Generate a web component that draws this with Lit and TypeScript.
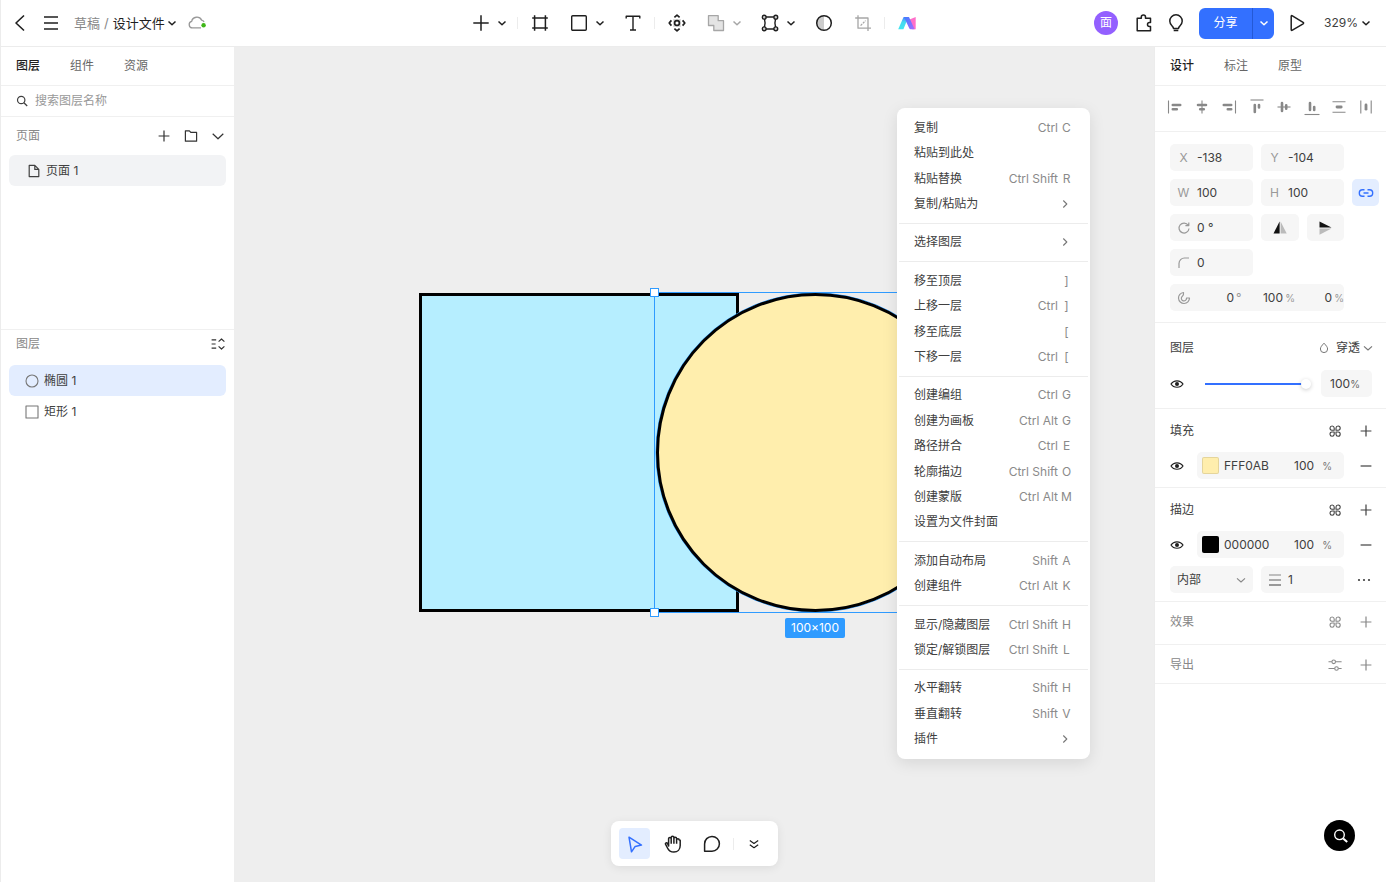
import { LitElement, html, svg, css, nothing, TemplateResult } from "lit";
import { customElement, property, state } from "lit/decorators.js";
import { classMap } from "lit/directives/class-map.js";

/* Every glyph is drawn on a 24 by 24 grid, centred on 12,12. */
const glyphs: Record<string, TemplateResult> = {
  back: svg`<path d="M16 4.5 8 12l8 7.5" stroke-width="1.6"/>`,
  menu: svg`<path d="M5 6h14M5 12h14M5 18h14" stroke-width="1.6"/>`,
  chevron: svg`<path d="m8.5 10.5 3.5 3.3 3.5-3.3" stroke-width="1.5"/>`,
  chevronThin: svg`<path d="m8 10.3 4 3.7 4-3.7" stroke-width="1.1"/>`,
  chevronWide: svg`<path d="m6.7 9.8 5.3 5 5.3-5" stroke-width="1.2"/>`,
  chevronRight: svg`<path d="m10.3 8.5 3.5 3.5-3.5 3.5" stroke-width="1.1"/>`,
  cloud: svg`<path d="M16 16.9H7.6a3.3 3.3 0 0 1-.9-6.5 5.2 4.9 0 0 1 9.9-1.3 3.6 3.6 0 0 1 2.500 1.9" stroke="#999" stroke-width="1.3"/><circle cx="18.6" cy="14.3" r="2.2" fill="#3fb618" stroke="none"/>`,
  plusLarge: svg`<path d="M12 4.3v15.4M4.3 12h15.4" stroke-width="1.5"/>`,
  plus: svg`<path d="M12 6.6v10.8M6.6 12h10.8" stroke-width="1.2"/>`,
  minus: svg`<path d="M6.6 12h10.8" stroke-width="1.2"/>`,
  frame: svg`<path d="M6.6 4.2v15.6M17.4 4.2v15.6M4.2 7h15.6M4.2 17h15.6" stroke-width="1.5"/>`,
  rect: svg`<rect x="4.7" y="4.7" width="14.6" height="14.6" rx="1" stroke-width="1.4"/>`,
  text: svg`<path d="M5.2 7.6V5.2h13.6v2.4M12 5.2v13.6M9 19h6" stroke-width="1.4"/>`,
  move: svg`<path d="M8 8h8v8H8z" fill="#ddd" stroke="none"/><circle cx="12" cy="12" r="2.4" fill="#fff" stroke-width="1.7"/><path d="m9.4 6.400 2.600-2.200 2.600 2.200M9.400 17.600l2.600 2.200 2.600-2.200M6.400 9.400 4.200 12l2.200 2.600M17.600 9.400l2.200 2.600-2.200 2.600" stroke-width="1.7"/>`,
  union: svg`<path d="M4.5 4.7h9.7v5h5.3v9.8H9.8v-5H4.5z" fill="#e4e4e4" stroke-width="1.3"/>`,
  vector: svg`<path d="M7.8 6h8.4M7.8 18h8.4M6.4 7.8c.9 2.8.9 5.6 0 8.4M17.6 7.8c-.9 2.8-.9 5.6 0 8.4" stroke-width="1.4"/><circle cx="6.2" cy="6.2" r="1.9" fill="#ccc" stroke-width="1.4"/><circle cx="17.8" cy="6.2" r="1.9" fill="#ccc" stroke-width="1.4"/><circle cx="6.2" cy="17.8" r="1.9" fill="#ccc" stroke-width="1.4"/><circle cx="17.8" cy="17.8" r="1.9" fill="#ccc" stroke-width="1.4"/>`,
  mask: svg`<path d="M12 4.7a7.3 7.3 0 0 0 0 14.6z" fill="#ccc" stroke="none"/><circle cx="12" cy="12" r="7.3" stroke-width="1.5"/>`,
  crop: svg`<path d="M7 4.2v13h13M4.2 7H17v13" stroke-width="1.3"/><path d="m9.6 14.6 5-5" stroke-width="1.2" stroke-dasharray="2.2 1"/>`,
  ai: svg`<defs><linearGradient id="a" x1="0" y1="1" x2="0" y2="0"><stop stop-color="#43e6f0"/><stop offset=".6" stop-color="#46d8f0"/><stop offset="1" stop-color="#4a7bff"/></linearGradient><linearGradient id="b" x1="0" y1="0" x2="1" y2="1"><stop stop-color="#3f7cff"/><stop offset="1" stop-color="#a86bff"/></linearGradient></defs><path d="M14.5 8.5 20.700 6v12.300h-3.600z" fill="#ff6fc9" stroke="none"/><path d="M8.600 6h4.800L8.400 18.300H3.200z" fill="url(#a)" stroke="none"/><path d="M9 6h5l5.600 12.300h-3.800q-1.200 0-1.700-1.200z" fill="url(#b)" stroke="none"/>`,
  puzzle: svg`<path d="M9.3 7.3V6.1a2.1 2.1 0 0 1 4.2 0v1.2h5v4.2h-1a2 2 0 0 0 0 4h1v4.2H5.2V7.3z" stroke-width="1.5"/>`,
  bulb: svg`<path d="M9.5 17.6c0-1.3-.8-2-1.6-2.9a6.2 6.2 0 1 1 8.2 0c-.8.9-1.6 1.6-1.6 2.9zM9.7 19.5h4.6" stroke-width="1.5"/>`,
  play: svg`<path d="M6.2 5.4v13.2q0 1.3 1.2.6l10.7-6.4q1-.7 0-1.4L7.4 4.8q-1.2-.7-1.2.6z" stroke-width="1.5"/>`,
  search: svg`<circle cx="11.200" cy="11" r="3.7" stroke-width="1.2"/><path d="m13.900 13.700 3.3 3.3" stroke-width="1.3"/>`,
  searchLarge: svg`<circle cx="11.5" cy="10.8" r="4.8" stroke-width="1.4"/><path d="m15.2 14.5 4 3.6" stroke-width="2"/>`,
  folder: svg`<path d="M6.4 6.8h4l1.4 1.6h5.8v8.8H6.4z" stroke-width="1.2"/>`,
  file: svg`<path d="M7.2 6.4h5.6l4 4v7.2H7.2zM12.8 6.4v4h4" stroke-width="1.2"/>`,
  collapse: svg`<path d="M5.6 7.8h4.6M5.6 12h4M5.6 16.2h4.6M12.6 9.6 15.5 7l2.9 2.6M12.6 14.4l2.9 2.6 2.9-2.6" stroke-width="1.2"/>`,
  ellipse: svg`<circle cx="12" cy="12" r="6" stroke-width="1.1"/>`,
  square: svg`<rect x="6" y="6" width="12" height="12" stroke-width="1.1"/>`,
  alignLeft: svg`<path d="M5.5 5.5v13" stroke-width="1.1"/><path d="M9.8 10h7.4M9.8 14.2h4" stroke-width="2.6" stroke-linecap="round"/>`,
  alignCenter: svg`<path d="M12 5.5v13" stroke-width="1.1"/><path d="M8 10h8M10.2 14.2h3.6" stroke-width="2.6" stroke-linecap="round"/>`,
  alignRight: svg`<path d="M18.5 5.5v13" stroke-width="1.1"/><path d="M6.8 10h7.4M10.8 14.2h3.4" stroke-width="2.6" stroke-linecap="round"/>`,
  alignTop: svg`<path d="M5.5 5h13" stroke-width="1.1"/><path d="M9.8 10v7M14 10v2.4" stroke-width="2.6" stroke-linecap="round"/>`,
  alignMiddle: svg`<path d="M5.5 12h13" stroke-width="1.1"/><path d="M10 8v8M14.2 10.2v3.6" stroke-width="2.6" stroke-linecap="round"/>`,
  alignBottom: svg`<path d="M4.5 19.5h15" stroke-width="1.1"/><path d="M10 8v7M14.2 12v3" stroke-width="2.6" stroke-linecap="round"/>`,
  spaceRows: svg`<path d="M5.5 6.8h13M5.5 17.2h13" stroke-width="1.1"/><path d="M10 12h4.2" stroke-width="2.8" stroke-linecap="round"/>`,
  spaceColumns: svg`<path d="M6.8 5.5v13M17.2 5.5v13" stroke-width="1.1"/><path d="M12 10v4.2" stroke-width="2.8" stroke-linecap="round"/>`,
  rotate: svg`<path d="M16.2 9.3A5 5 0 1 0 17 12.5M16.8 6.6v3h-3.4" stroke-width="1.2"/>`,
  corner: svg`<path d="M7 17v-4.5A5.5 5.5 0 0 1 12.5 7H17" stroke-width="1.2"/>`,
  arc: svg`<path d="M11.5 6.5A5.5 5.5 0 1 0 17.5 12h-3a2.6 2.6 0 1 1-4.4-1.5c1-1 1.9-1.7 1.4-4z" stroke-width="1.2"/>`,
  flipX: svg`<path d="M11.6 5.5v12H5.5z" fill="#111" stroke="none"/><path d="M12.6 5.5v12h6.1z" fill="#bbb" stroke="none"/>`,
  flipY: svg`<path d="M6.5 5.5v6.1h12z" fill="#111" stroke="none"/><path d="M6.5 18.7v-6.1h12z" fill="#bbb" stroke="none"/>`,
  link: svg`<path d="M10.5 15.2h-2a3.2 3.2 0 0 1 0-6.4h2M13.5 8.8h2a3.2 3.2 0 0 1 0 6.4h-2M9.5 12h5" stroke-width="1.4"/>`,
  drop: svg`<path d="M12 7.2c2.200 2.400 3.600 4 3.600 5.800a3.600 3.600 0 0 1-7.200 0c0-1.800 1.400-3.400 3.600-5.800z" stroke-width="1"/>`,
  eye: svg`<path d="M6 12c2.7-4.3 9.3-4.3 12 0-2.7 4.3-9.3 4.3-12 0z" stroke-width="1.2"/><circle cx="12" cy="12" r="2" fill="currentColor" stroke="none"/>`,
  styles: svg`<path d="M11.200 11.200H8.900a2.100 2.100 0 1 1 2.300-2.200zM13 11.200V9a2.100 2.100 0 1 1 2.200 2.200zM11.200 13v2.200A2.100 2.100 0 1 1 8.900 13zM13 13h2.200A2.100 2.100 0 1 1 13 15.200z" stroke-width="1.1"/>`,
  weight: svg`<path d="M6 7h12" stroke-width="1.2"/><path d="M6 12h12" stroke-width="1.600"/><path d="M6 17h12" stroke-width="2"/>`,
  more: svg`<g fill="currentColor" stroke="none"><circle cx="7" cy="12" r="1.1"/><circle cx="12" cy="12" r="1.1"/><circle cx="17" cy="12" r="1.1"/></g>`,
  sliders: svg`<path d="M5.5 8.8h3.3M12.6 8.8h6M5.5 15.5h6M15.4 15.5h3.2" stroke-width="1.1"/><circle cx="10.7" cy="8.8" r="1.8" stroke-width="1.1"/><circle cx="13.5" cy="15.5" r="1.8" stroke-width="1.1"/>`,
  cursor: svg`<path d="M7 5.2 9.5 19.8l3.7-5.4 6.3-1.3z" stroke-width="1.5"/>`,
  hand: svg`<path d="M7.6 14V6.8a1.3 1.3 0 0 1 2.6 0V5.5a1.3 1.3 0 0 1 2.7 0v1a1.3 1.3 0 0 1 2.7 0v1.6a1.3 1.3 0 0 1 2.6 0l1 .2v5.2c0 4-2.6 6.6-6.3 6.6-3.3 0-5.2-1.5-6.4-4.1l-2-3.8c-.5-1.4 1.1-2 2-.8zM10.2 6.8v5M12.9 6.4v5.4M15.6 8v3.8" stroke-width="1.5"/>`,
  comment: svg`<path d="M4.6 19.2v-7.3a7.4 7.4 0 1 1 7.4 7.3z" stroke-width="1.5"/>`,
  double: svg`<path d="m7.8 8.5 4.2 2.9 4.2-2.9M7.8 12.8l4.2 2.9 4.2-2.9" stroke-width="1.2"/>`,
};

const reset = css`
  :host {
    font-family: Inter, "Noto Sans CJK SC", sans-serif;
    font-size: 12px;
    line-height: 20px;
    color: #404040;
  }
  * {
    box-sizing: border-box;
  }
  button,
  input,
  select {
    font: inherit;
    color: inherit;
    background: none;
    border: 0;
    padding: 0;
    margin: 0;
    outline: none;
    min-width: 0;
  }
  button {
    display: flex;
    align-items: center;
    justify-content: center;
    cursor: pointer;
    white-space: nowrap;
  }
`;

@customElement("ui-icon")
export class UiIcon extends LitElement {
  @property() name = "";
  static styles = css`
    :host {
      display: block;
      flex: none;
      width: 24px;
      height: 24px;
    }
    .glyph {
      display: block;
      fill: none;
      stroke: currentColor;
      stroke-linejoin: round;
    }
  `;
  render() {
    return html`<svg class="glyph" width="24" height="24" viewBox="0 0 24 24" aria-hidden="true">${glyphs[this.name]}</svg>`;
  }
}

@customElement("top-bar")
export class TopBar extends LitElement {
  static styles = [
    reset,
    css`
      :host {
        display: grid;
        grid-template-columns: 1fr auto 1fr;
        align-items: center;
        height: 47px;
        background: #fff;
        border-bottom: 1px solid #ececec;
        color: #1f1f1f;
      }
      .start,
      .tools,
      .end,
      .tool {
        display: flex;
        align-items: center;
      }
      .start {
        padding-left: 7px;
        gap: 7px;
      }
      .crumbs {
        display: flex;
        align-items: center;
        gap: 4px;
        padding-left: 4px;
        font-size: 13px;
      }
      .folder {
        color: #888;
        text-decoration: none;
      }
      .name ui-icon {
        margin: 0 -6px 0 -5px;
      }
      .tools {
        gap: 8px;
      }
      .main {
        width: 31px;
        height: 31px;
      }
      .drop {
        width: 12px;
        height: 31px;
      }
      .split {
        padding-right: 3px;
      }
      .off {
        color: #a6a6a6;
      }
      .rule {
        width: 1px;
        height: 12px;
        margin: 0 -2px;
        background: #ececec;
      }
      .end {
        justify-content: flex-end;
        padding-right: 12px;
        gap: 8px;
      }
      .avatar {
        width: 24px;
        height: 24px;
        margin-right: 6px;
        border-radius: 50%;
        background: #9360ff;
        color: #fff;
        text-align: center;
        line-height: 24px;
      }
      .share {
        display: flex;
        height: 31px;
        margin: 0 3px;
        border-radius: 6px;
        background: #3370ff;
        color: #fff;
        overflow: hidden;
      }
      .share-main {
        width: 53px;
      }
      .share-drop {
        width: 22px;
        border-left: 1px solid #2459d6;
      }
      .zoom {
        margin-left: 7px;
        color: #404040;
      }
      .zoom ui-icon {
        margin: 0 -4px;
        color: #1f1f1f;
      }
    `,
  ];
  tool(name: string, label: string, drop = false, off = false) {
    return html`<div class=${classMap({ tool: true, split: drop, off })}>
      <button class="main" aria-label=${label}><ui-icon name=${name}></ui-icon></button>
      ${drop ? html`<button class="drop" aria-label="${label}选项"><ui-icon name="chevron"></ui-icon></button>` : nothing}
    </div>`;
  }
  render() {
    return html`
      <div class="start">
        <button aria-label="返回"><ui-icon name="back"></ui-icon></button>
        <button aria-label="菜单"><ui-icon name="menu"></ui-icon></button>
        <nav class="crumbs">
          <a class="folder" href="#">草稿</a><span class="folder">/</span>
          <button class="name">设计文件<ui-icon name="chevron"></ui-icon></button>
        </nav>
        <ui-icon name="cloud"></ui-icon>
      </div>
      <div class="tools">
        ${this.tool("plusLarge", "添加", true)}
        <span class="rule"></span>
        ${this.tool("frame", "画板")} ${this.tool("rect", "矩形", true)} ${this.tool("text", "文本")}
        <span class="rule"></span>
        ${this.tool("move", "组件")} ${this.tool("union", "布尔", true, true)}
        ${this.tool("vector", "路径", true)} ${this.tool("mask", "蒙版")} ${this.tool("crop", "裁剪", false, true)}
        <span class="rule"></span>
        ${this.tool("ai", "智能")}
      </div>
      <div class="end">
        <span class="avatar">面</span>
        <button aria-label="插件"><ui-icon name="puzzle"></ui-icon></button>
        <button aria-label="提示"><ui-icon name="bulb"></ui-icon></button>
        <div class="share">
          <button class="share-main">分享</button>
          <button class="share-drop" aria-label="分享选项"><ui-icon name="chevron"></ui-icon></button>
        </div>
        <button aria-label="播放"><ui-icon name="play"></ui-icon></button>
        <button class="zoom">329%<ui-icon name="chevron"></ui-icon></button>
      </div>
    `;
  }
}

@customElement("layer-panel")
export class LayerPanel extends LitElement {
  @state() selected = 0;
  static styles = [
    reset,
    css`
      :host {
        display: flex;
        flex-direction: column;
        background: #fff;
      }
      .tabs {
        display: flex;
        gap: 30px;
        height: 39px;
        padding: 0 15px;
        border-bottom: 1px solid #f0f0f0;
      }
      .tab {
        color: #666;
      }
      .active {
        color: #1f1f1f;
        font-weight: 500;
      }
      .search {
        display: flex;
        align-items: center;
        height: 31px;
        padding: 0 9px;
        border-bottom: 1px solid #f0f0f0;
      }
      .search input {
        flex: 1;
        padding-left: 1px;
      }
      .search input::placeholder {
        color: #999;
        opacity: 1;
      }
      .pages {
        min-height: 213px;
        padding: 7px 8px;
        border-bottom: 1px solid #f0f0f0;
      }
      .layers {
        padding: 2px 8px;
      }
      .head {
        display: flex;
        align-items: center;
        gap: 3px;
        height: 24px;
        padding-left: 7px;
        margin-bottom: 7px;
        color: #333;
      }
      .title {
        flex: 1;
        color: #888;
      }
      .head button {
        width: 24px;
        margin-right: -4px;
      }
      .head button + button {
        margin-left: 4px;
      }
      .layers .head {
        margin-bottom: 9px;
      }
      .item {
        width: 100%;
        height: 31px;
        border-radius: 6px;
        justify-content: flex-start;
        padding-left: 11px;
      }
      .layer ui-icon {
        color: #777;
      }
      .page {
        padding-left: 13px;
        background: #f2f3f5;
      }
      .selected {
        background: #e3edff;
      }
    `,
  ];
  render() {
    const layers = [
      ["ellipse", "椭圆 1"],
      ["square", "矩形 1"],
    ];
    return html`
      <div class="tabs">
        <button class="tab active">图层</button>
        <button class="tab">组件</button>
        <button class="tab">资源</button>
      </div>
      <label class="search"><ui-icon name="search"></ui-icon><input aria-label="搜索" placeholder="搜索图层名称" /></label>
      <section class="pages">
        <div class="head">
          <span class="title">页面</span>
          <button aria-label="新建页面"><ui-icon name="plus"></ui-icon></button>
          <button aria-label="新建分组"><ui-icon name="folder"></ui-icon></button>
          <button aria-label="收起"><ui-icon name="chevronWide"></ui-icon></button>
        </div>
        <button class="item page"><ui-icon name="file"></ui-icon>页面 1</button>
      </section>
      <section class="layers">
        <div class="head">
          <span class="title">图层</span>
          <button aria-label="全部收起"><ui-icon name="collapse"></ui-icon></button>
        </div>
        ${layers.map(
          ([icon, name], i) => html`<button
            class=${classMap({ item: true, layer: true, selected: i === this.selected })}
            @click=${() => (this.selected = i)}
          >
            <ui-icon name=${icon}></ui-icon>${name}
          </button>`,
        )}
      </section>
    `;
  }
}

@customElement("context-menu")
export class ContextMenu extends LitElement {
  static styles = [
    reset,
    css`
      :host {
        display: flex;
        flex-direction: column;
        width: 193px;
        min-height: 651px;
        padding: 7px 2px;
        border-radius: 8px;
        background: #fff;
        box-shadow: 0 4px 16px rgba(0, 0, 0, 0.1);
      }
      .row {
        flex: 1 0 25px;
        justify-content: space-between;
        padding: 0 17px 0 15px;
      }
      .keys {
        display: flex;
        gap: 4px;
        color: #8a8a8a;
      }
      .letter {
        display: flex;
        justify-content: center;
        width: 9px;
      }
      .row ui-icon {
        margin-right: -6px;
        color: #777;
      }
      .rule {
        height: 1px;
        margin: 6px 0;
        background: #ececec;
      }
    `,
  ];
  render() {
    const groups: string[][][] = [
      [["复制", "C", "Ctrl"], ["粘贴到此处", ""], ["粘贴替换", "R", "Ctrl Shift"], ["复制/粘贴为", ">"]],
      [["选择图层", ">"]],
      [["移至顶层", "]"], ["上移一层", "]", "Ctrl"], ["移至底层", "["], ["下移一层", "[", "Ctrl"]],
      [
        ["创建编组", "G", "Ctrl"],
        ["创建为画板", "G", "Ctrl Alt"],
        ["路径拼合", "E", "Ctrl"],
        ["轮廓描边", "O", "Ctrl Shift"],
        ["创建蒙版", "M", "Ctrl Alt"],
        ["设置为文件封面", ""],
      ],
      [["添加自动布局", "A", "Shift"], ["创建组件", "K", "Ctrl Alt"]],
      [["显示/隐藏图层", "H", "Ctrl Shift"], ["锁定/解锁图层", "L", "Ctrl Shift"]],
      [["水平翻转", "H", "Shift"], ["垂直翻转", "V", "Shift"], ["插件", ">"]],
    ];
    return groups.map(
      (rows, g) => html`${g ? html`<div class="rule"></div>` : nothing}${rows.map(
        ([name, letter, modifiers]) => html`<button class="row">
          <span>${name}</span>${letter === ">"
            ? html`<ui-icon name="chevronRight"></ui-icon>`
            : letter
              ? html`<span class="keys">${modifiers ? html`<span>${modifiers}</span>` : nothing}<span class="letter">${letter}</span></span>`
              : nothing}
        </button>`,
      )}`,
    );
  }
}

@customElement("design-canvas")
export class DesignCanvas extends LitElement {
  static styles = [
    reset,
    css`
      :host {
        display: flex;
        flex-direction: column;
        justify-content: flex-end;
        align-items: center;
        position: relative;
        overflow: hidden;
        padding-bottom: 16px;
        background: #eee;
      }
      .scene {
        position: absolute;
        inset: 0;
        width: 100%;
        height: 100%;
      }
      .size {
        position: absolute;
        left: 551px;
        top: 571px;
        padding: 0 6px;
        border-radius: 2px;
        background: #2f9bff;
        color: #fff;
      }
      context-menu {
        position: absolute;
        left: 663px;
        top: 61px;
      }
      .dock {
        position: relative;
        display: flex;
        align-items: center;
        gap: 8px;
        padding: 7px 8px;
        border-radius: 8px;
        background: #fff;
        color: #1f1f1f;
        box-shadow: 0 2px 10px rgba(0, 0, 0, 0.08);
      }
      .dock button {
        width: 31px;
        height: 31px;
        border-radius: 4px;
      }
      .dock .on {
        background: #e3edff;
        color: #3370ff;
      }
      .rule {
        width: 1px;
        height: 12px;
        margin: 0 -3px;
        background: #ececec;
      }
    `,
  ];
  render() {
    return html`
      <svg class="scene">
        <rect x="186.5" y="247.5" width="317" height="316" fill="#b6eeff" stroke="#000" stroke-width="3" />
        <circle cx="581.5" cy="405.5" r="159.5" fill="none" stroke="#2f9bff" />
        <circle cx="581.5" cy="405.5" r="158" fill="#ffeead" stroke="#000" stroke-width="3" />
        <rect x="420.5" y="245.5" width="320" height="320" fill="none" stroke="#2f9bff" />
        <rect x="416.5" y="241.5" width="8" height="8" fill="#fff" stroke="#2f9bff" />
        <rect x="416.5" y="561.5" width="8" height="8" fill="#fff" stroke="#2f9bff" />
      </svg>
      <span class="size">100×100</span>
      <context-menu></context-menu>
      <div class="dock">
        <button class="on" aria-label="选择"><ui-icon name="cursor"></ui-icon></button>
        <button aria-label="移动"><ui-icon name="hand"></ui-icon></button>
        <button aria-label="评论"><ui-icon name="comment"></ui-icon></button>
        <span class="rule"></span>
        <button aria-label="更多"><ui-icon name="double"></ui-icon></button>
      </div>
    `;
  }
}

@customElement("design-panel")
export class DesignPanel extends LitElement {
  @state() opacity = 100;
  static styles = [
    reset,
    css`
      :host {
        display: flex;
        flex-direction: column;
        background: #fff;
        border-left: 1px solid #ececec;
      }
      .tabs {
        display: flex;
        gap: 30px;
        height: 39px;
        padding: 0 15px;
        border-bottom: 1px solid #f0f0f0;
      }
      .tab {
        color: #666;
      }
      .active {
        color: #1f1f1f;
        font-weight: 500;
      }
      .aligns {
        display: flex;
        justify-content: space-between;
        padding: 9px 7px 12px 7px;
        border-bottom: 1px solid #f0f0f0;
        color: #888;
      }
      .aligns button {
        width: 25px;
        height: 24px;
      }
      section {
        border-bottom: 1px solid #f0f0f0;
        padding: 0 7px 0 15px;
      }
      .props {
        display: grid;
        grid-template-columns: 1fr 1fr 27px;
        gap: 8px;
        padding-top: 12px;
        padding-bottom: 11px;
      }
      .field {
        display: flex;
        align-items: center;
        height: 27px;
        border-radius: 5px;
        background: #f6f6f6;
        min-width: 0;
      }
      .field input {
        width: 0;
        flex: 1;
      }
      .key {
        width: 27px;
        flex: none;
        display: flex;
        justify-content: center;
        color: #999;
      }
      .first {
        grid-column: 1;
      }
      .flips {
        display: grid;
        grid-template-columns: 1fr 1fr;
        gap: 8px;
      }
      .link {
        height: 27px;
        border-radius: 5px;
        background: #e3edff;
        color: #3370ff;
      }
      .arc {
        grid-column: 1 / 3;
      }
      .arc input {
        text-align: right;
      }
      .unit {
        flex: none;
        width: 12px;
        text-align: right;
        font-size: 10px;
        color: #999;
      }
      .degree {
        padding-left: 2px;
        text-align: left;
        font-size: 12px;
      }
      .head {
        display: flex;
        align-items: center;
        height: 24px;
        gap: 7px;
        padding-right: 1px;
      }
      .title {
        flex: 1;
      }
      .section-title {
        color: #262626;
      }
      .blend ui-icon {
        color: #777;
      }
      .down {
        margin: 0 -2px 0 -4px;
      }
      .line {
        display: flex;
        align-items: center;
        height: 27px;
      }
      .layer {
        padding-top: 13px;
        padding-bottom: 11px;
      }
      .layer .line {
        margin-top: 10px;
      }
      .eye {
        width: 24px;
        margin-left: -5px;
        margin-right: 1px;
        color: #1f1f1f;
      }
      .range {
        appearance: none;
        flex: 1;
        height: 14px;
        margin: 0 10px 0 15px;
        background: linear-gradient(#3370ff, #3370ff) no-repeat left center / calc(100% - 5px) 2px;
      }
      .range::-webkit-slider-thumb {
        appearance: none;
        width: 10px;
        height: 10px;
        border-radius: 50%;
        background: #fff;
        box-shadow: 0 1px 4px rgba(0, 0, 0, 0.2);
      }
      .percent {
        width: 51px;
        margin-right: 7px;
        padding: 0 12px 0 9px;
      }
      .percent .unit {
        width: 10px;
        color: #666;
      }
      .paint {
        padding-top: 10px;
        padding-bottom: 8px;
      }
      .paint .line {
        margin-top: 9px;
      }
      .color {
        flex: 1;
        margin-left: 7px;
        padding: 0 12px 0 5px;
      }
      .swatch {
        width: 17px;
        height: 17px;
        margin-right: 5px;
        border-radius: 2px;
        border: 1px solid rgba(0, 0, 0, 0.1);
        flex: none;
      }
      .fill {
        background: #ffeead;
      }
      .black {
        background: #000;
      }
      .color .alpha {
        flex: none;
        width: 22px;
      }
      .color .unit {
        width: 16px;
        color: #777;
      }
      .more {
        width: 24px;
        margin: 0 1px 0 10px;
      }
      .stroke {
        display: grid;
        grid-template-columns: 1fr 1fr 24px;
        column-gap: 8px;
        padding-right: 3px;
        margin-top: 8px;
      }
      .select {
        padding: 0 0 0 7px;
      }
      .select select {
        flex: 1;
        appearance: none;
      }
      .select ui-icon {
        color: #888;
      }
      .empty {
        color: #888;
        padding-top: 8px;
        padding-bottom: 10px;
      }
      .last {
        padding-bottom: 6px;
      }
    `,
  ];
  head(title: string, icon = "styles") {
    return html`<div class="head">
      <span class="title">${title}</span>
      <button aria-label="${title}样式"><ui-icon name=${icon}></ui-icon></button>
      <button aria-label="添加${title}"><ui-icon name="plus"></ui-icon></button>
    </div>`;
  }
  field(key: string | TemplateResult, label: string, value: string, cls = "") {
    return html`<label class="field ${cls}"><span class="key">${key}</span><input aria-label=${label} value=${value} /></label>`;
  }
  paint(cls: string, value: string) {
    return html`<div class="line">
      <button class="eye" aria-label="显示"><ui-icon name="eye"></ui-icon></button>
      <div class="field color">
        <button class="swatch ${cls}" aria-label="颜色"></button>
        <input aria-label="色值" value=${value} />
        <input class="alpha" aria-label="不透明度" value="100" />
        <span class="unit">%</span>
      </div>
      <button class="more" aria-label="移除"><ui-icon name="minus"></ui-icon></button>
    </div>`;
  }
  render() {
    const aligns = ["alignLeft", "alignCenter", "alignRight", "alignTop", "alignMiddle", "alignBottom", "spaceRows", "spaceColumns"];
    return html`
      <div class="tabs">
        <button class="tab active">设计</button>
        <button class="tab">标注</button>
        <button class="tab">原型</button>
      </div>
      <div class="aligns">${aligns.map((a) => html`<button aria-label=${a}><ui-icon name=${a}></ui-icon></button>`)}</div>
      <section class="props">
        ${this.field("X", "X", "-138", "first")} ${this.field("Y", "Y", "-104")}
        ${this.field("W", "W", "100", "first")} ${this.field("H", "H", "100")}
        <button class="link" aria-label="锁定比例"><ui-icon name="link"></ui-icon></button>
        ${this.field(html`<ui-icon name="rotate"></ui-icon>`, "旋转", "0 °", "first")}
        <div class="flips">
          <button class="field" aria-label="水平翻转"><ui-icon name="flipX"></ui-icon></button>
          <button class="field" aria-label="垂直翻转"><ui-icon name="flipY"></ui-icon></button>
        </div>
        ${this.field(html`<ui-icon name="corner"></ui-icon>`, "圆角", "0", "first")}
        <div class="field arc">
          <span class="key"><ui-icon name="arc"></ui-icon></span>
          <input aria-label="起点" value="0" /><span class="unit degree">°</span>
          <input aria-label="扫描" value="100" /><span class="unit">%</span>
          <input aria-label="比率" value="0" /><span class="unit">%</span>
        </div>
      </section>
      <section class="layer">
        <div class="head">
          <span class="title">图层</span>
          <button class="blend">
            <ui-icon name="drop"></ui-icon>穿透<ui-icon class="down" name="chevronThin"></ui-icon>
          </button>
        </div>
        <div class="line">
          <button class="eye" aria-label="显示"><ui-icon name="eye"></ui-icon></button>
          <input
            class="range"
            type="range"
            aria-label="不透明度"
            min="0"
            max="100"
            .value=${String(this.opacity)}
            @input=${(e: Event) => (this.opacity = Number((e.target as HTMLInputElement).value))}
          />
          <label class="field percent"><input aria-label="不透明度" .value=${String(this.opacity)} /><span class="unit">%</span></label>
        </div>
      </section>
      <section class="paint">${this.head("填充")} ${this.paint("fill", "FFF0AB")}</section>
      <section class="paint">
        ${this.head("描边")} ${this.paint("black", "000000")}
        <div class="stroke">
          <label class="field select">
            <select aria-label="描边位置">
              <option>内部</option>
              <option>居中</option>
              <option>外部</option>
            </select>
            <ui-icon name="chevronThin"></ui-icon>
          </label>
          ${this.field(html`<ui-icon name="weight"></ui-icon>`, "粗细", "1")}
          <button aria-label="更多"><ui-icon name="more"></ui-icon></button>
        </div>
      </section>
      <section class="empty">${this.head("效果")}</section>
      <section class="empty last">${this.head("导出", "sliders")}</section>
    `;
  }
}

@customElement("app-root")
export class AppRoot extends LitElement {
  static styles = [
    reset,
    css`
      :host {
        display: grid;
        grid-template-columns: 234px 1fr 232px;
        grid-template-rows: auto 1fr;
        min-height: 100vh;
        background: #fff;
      }
      top-bar {
        grid-column: 1 / -1;
      }
      layer-panel,
      top-bar {
        border-left: 1px solid #ececec;
      }
      .help {
        position: fixed;
        right: 31px;
        bottom: 31px;
        width: 31px;
        height: 31px;
        border-radius: 50%;
        background: #000;
        color: #fff;
      }
    `,
  ];
  render() {
    return html`
      <top-bar></top-bar>
      <layer-panel></layer-panel>
      <design-canvas></design-canvas>
      <design-panel></design-panel>
      <button class="help" aria-label="查找"><ui-icon name="searchLarge"></ui-icon></button>
    `;
  }
}
